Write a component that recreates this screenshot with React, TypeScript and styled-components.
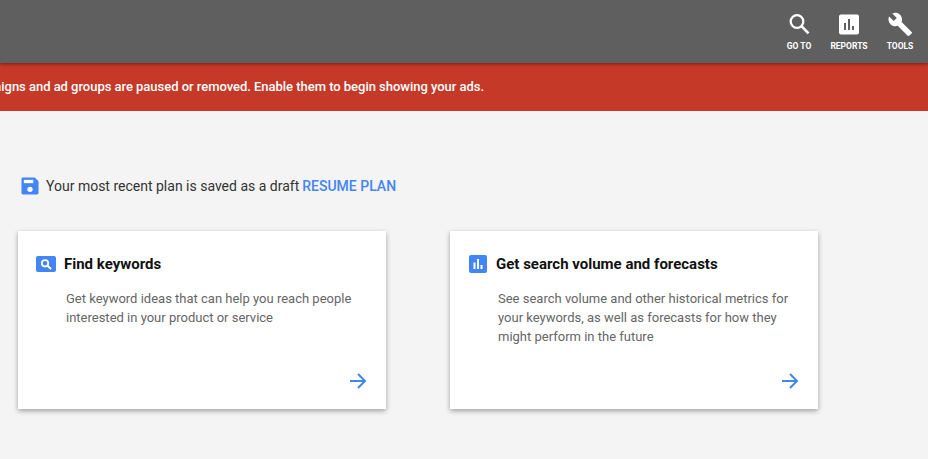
import React from "react";
import styled, { createGlobalStyle } from "styled-components";

const Global = createGlobalStyle`
  html, body { margin: 0; padding: 0; background: #f4f4f4; }
  body { font-family: Roboto, "Liberation Sans", sans-serif; width: 928px; height: 459px; overflow: hidden; }
`;
const Page = styled.div`display: flex; flex-direction: column; width: 928px; height: 459px; overflow: hidden;`;
const Header = styled.header`
  height: 63px; background: #5f5f5f; display: flex; justify-content: flex-end; align-items: flex-start; padding-right: 3px;
  position: relative; z-index: 1; box-shadow: 0 1px 3px rgba(0,0,0,.45);
`;
const NavItem = styled.div<{ $w: number }>`
  width: ${p => p.$w}px; display: flex; flex-direction: column; align-items: center; padding-top: 12px; color: #fff;
`;
const NavIcon = styled.svg`width: 24px; height: 24px; display: block; fill: #fff;`;
const NavLabel = styled.span`font-size: 8.5px; font-weight: 700; line-height: 10px; margin-top: 5px; white-space: nowrap;`;
const Banner = styled.div`
  height: 48px; background: #c53929; color: #fff; font-size: 13px; font-weight: 500; line-height: 48px; letter-spacing: -.03px;
  display: flex; justify-content: flex-end; padding-right: 444px; white-space: nowrap; overflow: hidden;
`;
const Main = styled.main`flex: 1; display: flex; flex-direction: column; padding: 65px 0 0 18px;`;
const Draft = styled.div`display: flex; align-items: center; height: 20px; padding-left: 3px; font-size: 14px; color: #333; gap: 7px;`;
const Resume = styled.span`color: #4285f4; font-weight: 500; margin-left: -4px;`;
const Cards = styled.div`display: flex; gap: 64px; margin-top: 35px;`;
const Card = styled.section`
  width: 368px; height: 178px; box-sizing: border-box; background: #fff; position: relative;
  box-shadow: 0 2px 5px rgba(0,0,0,.35); padding: 22px 18px 0; display: flex; flex-direction: column;
`;
const Title = styled.div<{ $indent?: number; $gap?: number }>`
  display: flex; align-items: center; height: 22px; margin-left: ${p => p.$indent ?? 0}px; gap: ${p => p.$gap ?? 8}px;
  font-size: 15px; font-weight: 700; color: #111;
`;
const Desc = styled.p`margin: 14px 0 0 30px; font-size: 13px; line-height: 19px; color: #666;`;
const Arrow = styled.svg`position: absolute; right: 18px; bottom: 18px; width: 20px; height: 20px; fill: none; stroke: #4285f4; stroke-width: 2;`;
const SmallIcon = styled.svg`display: block; flex: none;`;

const ArrowIcon = () => <Arrow viewBox="0 0 20 20"><path d="M2 10h15M10 3l7 7-7 7" /></Arrow>;

export default function App() {
  return (
    <Page>
      <Global />
      <Header>
        <NavItem $w={48}>
          <NavIcon viewBox="0 0 24 24">
            <circle cx="10" cy="9.500" r="6.300" fill="none" stroke="#fff" strokeWidth="2.300" />
            <path d="M14.500 14.200 21.500 21.300" fill="none" stroke="#fff" strokeWidth="2.600" />
          </NavIcon>
          <NavLabel>GO TO</NavLabel>
        </NavItem>
        <NavItem $w={52}>
          <NavIcon viewBox="0 0 24 24"><path d="M20 2.500H4a2 2 0 0 0-2 2v16a2 2 0 0 0 2 2h16a2 2 0 0 0 2-2v-16a2 2 0 0 0-2-2zM9 18H7v-7h2v7zm4 0h-2V7h2v11zm4 0h-2v-4h2v4z" /></NavIcon>
          <NavLabel>REPORTS</NavLabel>
        </NavItem>
        <NavItem $w={50}>
          <NavIcon viewBox="0 0 24 24"><path d="M23.600 19.900 13.600 9.900c.9-2.400.4-5.200-1.600-7.200C9.900.6 6.800.2 4.300 1.400L8.800 5.900 5.700 9 1.100 4.500C-.1 7 .4 10.100 2.500 12.200c2 2 4.800 2.500 7.200 1.600l10 10c.4.400 1.100.4 1.500 0l2.400-2.400c.5-.4.500-1.100 0-1.500z" /></NavIcon>
          <NavLabel>TOOLS</NavLabel>
        </NavItem>
      </Header>
      <Banner>All of your campaigns and ad groups are paused or removed. Enable them to begin showing your ads.</Banner>
      <Main>
        <Draft>
          <SmallIcon width="18" height="18" viewBox="0 0 19 19">
            <path fill="#4285f4" d="M2 .5h12.500L18.500 4.500V17a1.500 1.500 0 0 1-1.500 1.500H2A1.500 1.500 0 0 1 .5 17V2A1.500 1.500 0 0 1 2 .5z" />
            <rect x="3" y="3" width="10" height="3.500" fill="#fff" />
            <circle cx="9.500" cy="13" r="2.800" fill="#fff" />
          </SmallIcon>
          <span>Your most recent plan is saved as a draft</span>
          <Resume>RESUME PLAN</Resume>
        </Draft>
        <Cards>
          <Card>
            <Title>
              <SmallIcon width="20" height="16" viewBox="0 0 20 16">
                <rect width="20" height="16" rx="2" fill="#4285f4" />
                <circle cx="9" cy="7.300" r="3.200" fill="none" stroke="#fff" strokeWidth="1.800" />
                <path d="M11.500 9.800 15 13" stroke="#fff" strokeWidth="2" />
              </SmallIcon>
              Find keywords
            </Title>
            <Desc>Get keyword ideas that can help you reach people<br />interested in your product or service</Desc>
            <ArrowIcon />
          </Card>
          <Card>
            <Title $indent={1} $gap={9}>
              <SmallIcon width="18" height="18" viewBox="0 0 18 18">
                <rect width="18" height="18" rx="2" fill="#4285f4" />
                <path fill="#fff" d="M4.500 7.500h2V14h-2zM8 4h2v10H8zM11.500 10h2v4h-2z" />
              </SmallIcon>
              Get search volume and forecasts
            </Title>
            <Desc>See search volume and other historical metrics for<br />your keywords, as well as forecasts for how they<br />might perform in the future</Desc>
            <ArrowIcon />
          </Card>
        </Cards>
      </Main>
    </Page>
  );
}
